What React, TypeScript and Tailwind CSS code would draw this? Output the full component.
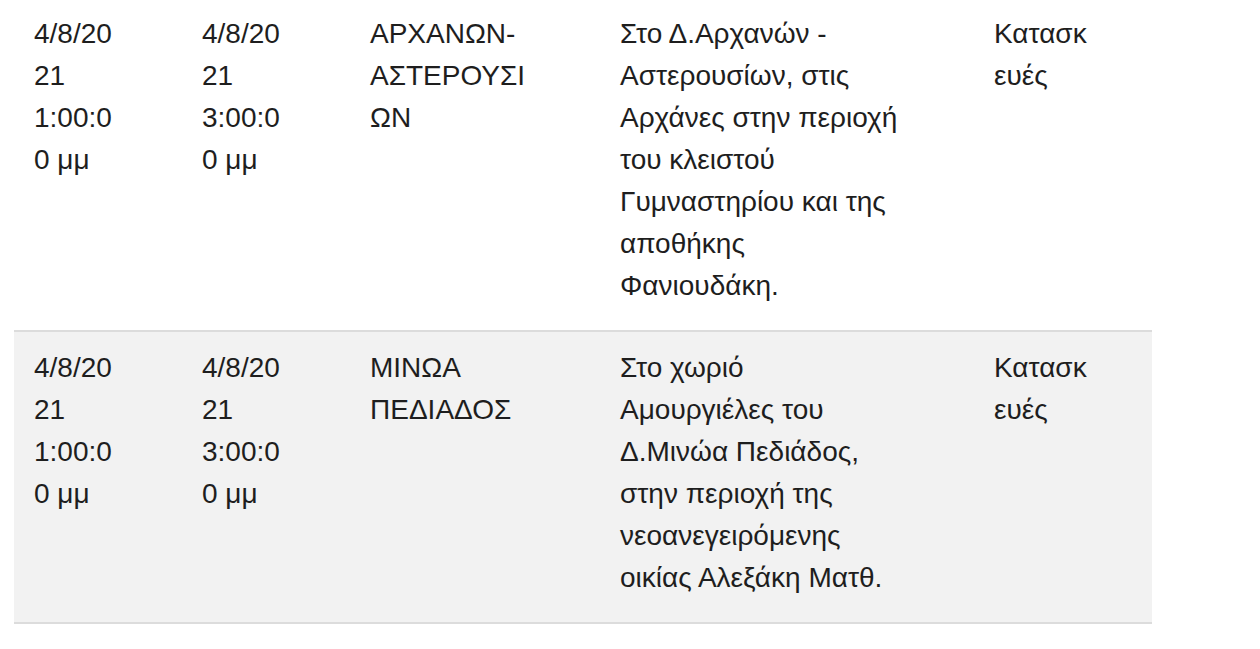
const rows = [
  {
    start: "4/8/2021 1:00:00 μμ",
    end: "4/8/2021 3:00:00 μμ",
    area: "ΑΡΧΑΝΩΝ-ΑΣΤΕΡΟΥΣΙΩΝ",
    place:
      "Στο Δ.Αρχανών - Αστερουσίων, στις Αρχάνες στην περιοχή του κλειστού Γυμναστηρίου και της αποθήκης Φανιουδάκη.",
    reason: "Κατασκευές",
  },
  {
    start: "4/8/2021 1:00:00 μμ",
    end: "4/8/2021 3:00:00 μμ",
    area: "ΜΙΝΩΑ ΠΕΔΙΑΔΟΣ",
    place:
      "Στο χωριό Αμουργιέλες του Δ.Μινώα Πεδιάδος, στην περιοχή της νεοανεγειρόμενης οικίας Αλεξάκη Ματθ.",
    reason: "Κατασκευές",
  },
];

export default function App() {
  return (
    <div
      className="min-h-screen bg-white text-[28px] leading-[42px] text-[#1e1e1e]"
      style={{ fontFamily: '"Liberation Sans", Arial, sans-serif' }}
    >
      <table className="mt-[-2px] ml-[14px] w-[1138px] table-fixed border-collapse">
        <colgroup>
          <col className="w-[168px]" />
          <col className="w-[168px]" />
          <col className="w-[250px]" />
          <col className="w-[374px]" />
          <col className="w-[178px]" />
        </colgroup>
        <tbody>
          {rows.map((row, i) => (
            <tr
              key={i}
              className={
                i % 2 === 1
                  ? "border-b-2 border-[#dcdcdc] bg-[#f2f2f2]"
                  : "border-b-2 border-[#dcdcdc] bg-white"
              }
            >
              <td className="break-words pt-[15px] pb-[23px] pl-[20px] pr-[58px] align-top">
                {row.start}
              </td>
              <td className="break-words pt-[15px] pb-[23px] pl-[20px] pr-[58px] align-top">
                {row.end}
              </td>
              <td className="break-words pt-[15px] pb-[23px] pl-[20px] pr-[55px] align-top">
                {row.area}
              </td>
              <td className="break-words pt-[15px] pb-[23px] pl-[20px] pr-[74px] align-top">
                {row.place}
              </td>
              <td className="break-words pt-[15px] pb-[23px] pl-[20px] pr-[60px] align-top">
                {row.reason}
              </td>
            </tr>
          ))}
        </tbody>
      </table>
    </div>
  );
}
